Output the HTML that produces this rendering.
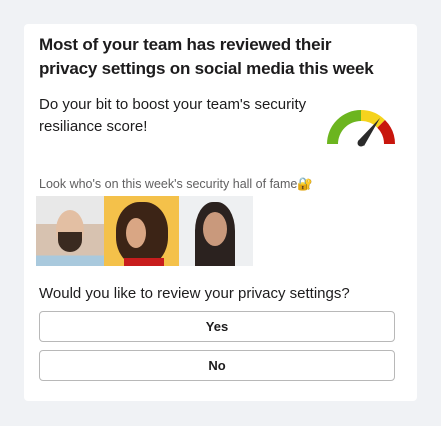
<!DOCTYPE html>
<html><head><style>
body{margin:0;width:441px;height:426px;background:#f0f2f5;font-family:"Liberation Sans",sans-serif;position:relative;overflow:hidden}
.card{position:absolute;left:24px;top:24px;width:393px;height:377px;background:#fff;border-radius:4px}
.a{position:absolute;white-space:nowrap;color:#1d1c1d}
.t{font-weight:bold;font-size:17px;letter-spacing:-0.2px}
.btn{position:absolute;left:39px;width:354px;height:29px;border:1px solid #b8b8b8;border-radius:4px;font-weight:bold;font-size:13px;text-align:center;line-height:29px;color:#1d1c1d}
.ph{position:absolute;top:196px;height:70px}
</style></head><body>
<div class="card"></div>
<div class="a t" style="left:39px;top:35px">Most of your team has reviewed their</div>
<div class="a t" style="left:39px;top:59px">privacy settings on social media this week</div>
<div class="a" style="left:39px;top:96px;font-size:15px">Do your bit to boost your team's security</div>
<div class="a" style="left:39px;top:118px;font-size:15px">resiliance score!</div>
<svg style="position:absolute;left:320px;top:104px" width="84" height="46" viewBox="320 104 84 46">
<path d="M327 144 A34 34 0 0 1 361 110 L361 121 A23 23 0 0 0 338 144Z" fill="#6cb51f"/>
<path d="M361 110 A34 34 0 0 1 385 120 L377.3 127.7 A23 23 0 0 0 361 121Z" fill="#f5d31d"/>
<path d="M385 120 A34 34 0 0 1 395 144 L384 144 A23 23 0 0 0 377.3 127.7Z" fill="#c8150c"/>
<path d="M358 141 L380 118 L364 146 Z" fill="#2a2a2a"/>
<circle cx="361" cy="143" r="3.5" fill="#2a2a2a"/>
</svg>
<div class="a" style="left:39px;top:177px;font-size:12.5px;color:#616061">Look who's on this week's security hall of fame🔐</div>
<div class="ph" style="left:36px;width:68px;background:linear-gradient(#e8e8e8 0 40%,#d7c2b0 40% 85%,#a9c9dd 85%)">
<div style="position:absolute;left:20px;top:14px;width:28px;height:40px;border-radius:50%;background:#e3bfa3"></div>
<div style="position:absolute;left:22px;top:36px;width:24px;height:20px;border-radius:0 0 12px 12px;background:#3a2a20"></div></div>
<div class="ph" style="left:104px;width:75px;background:#f4c14a">
<div style="position:absolute;left:12px;top:6px;width:52px;height:64px;border-radius:45%;background:#3c2416"></div>
<div style="position:absolute;left:22px;top:22px;width:20px;height:30px;border-radius:50%;background:#d9a684"></div>
<div style="position:absolute;left:20px;top:62px;width:40px;height:8px;background:#c81d1d"></div></div>
<div class="ph" style="left:179px;width:74px;background:#eef0f2">
<div style="position:absolute;left:16px;top:6px;width:40px;height:64px;border-radius:45% 45% 0 0;background:#2b221f"></div>
<div style="position:absolute;left:24px;top:16px;width:24px;height:34px;border-radius:50%;background:#c9997c"></div></div>
<div class="a" style="left:39px;top:285px;font-size:15px">Would you like to review your privacy settings?</div>
<div class="btn" style="top:311px">Yes</div>
<div class="btn" style="top:350px">No</div>
</body></html>
